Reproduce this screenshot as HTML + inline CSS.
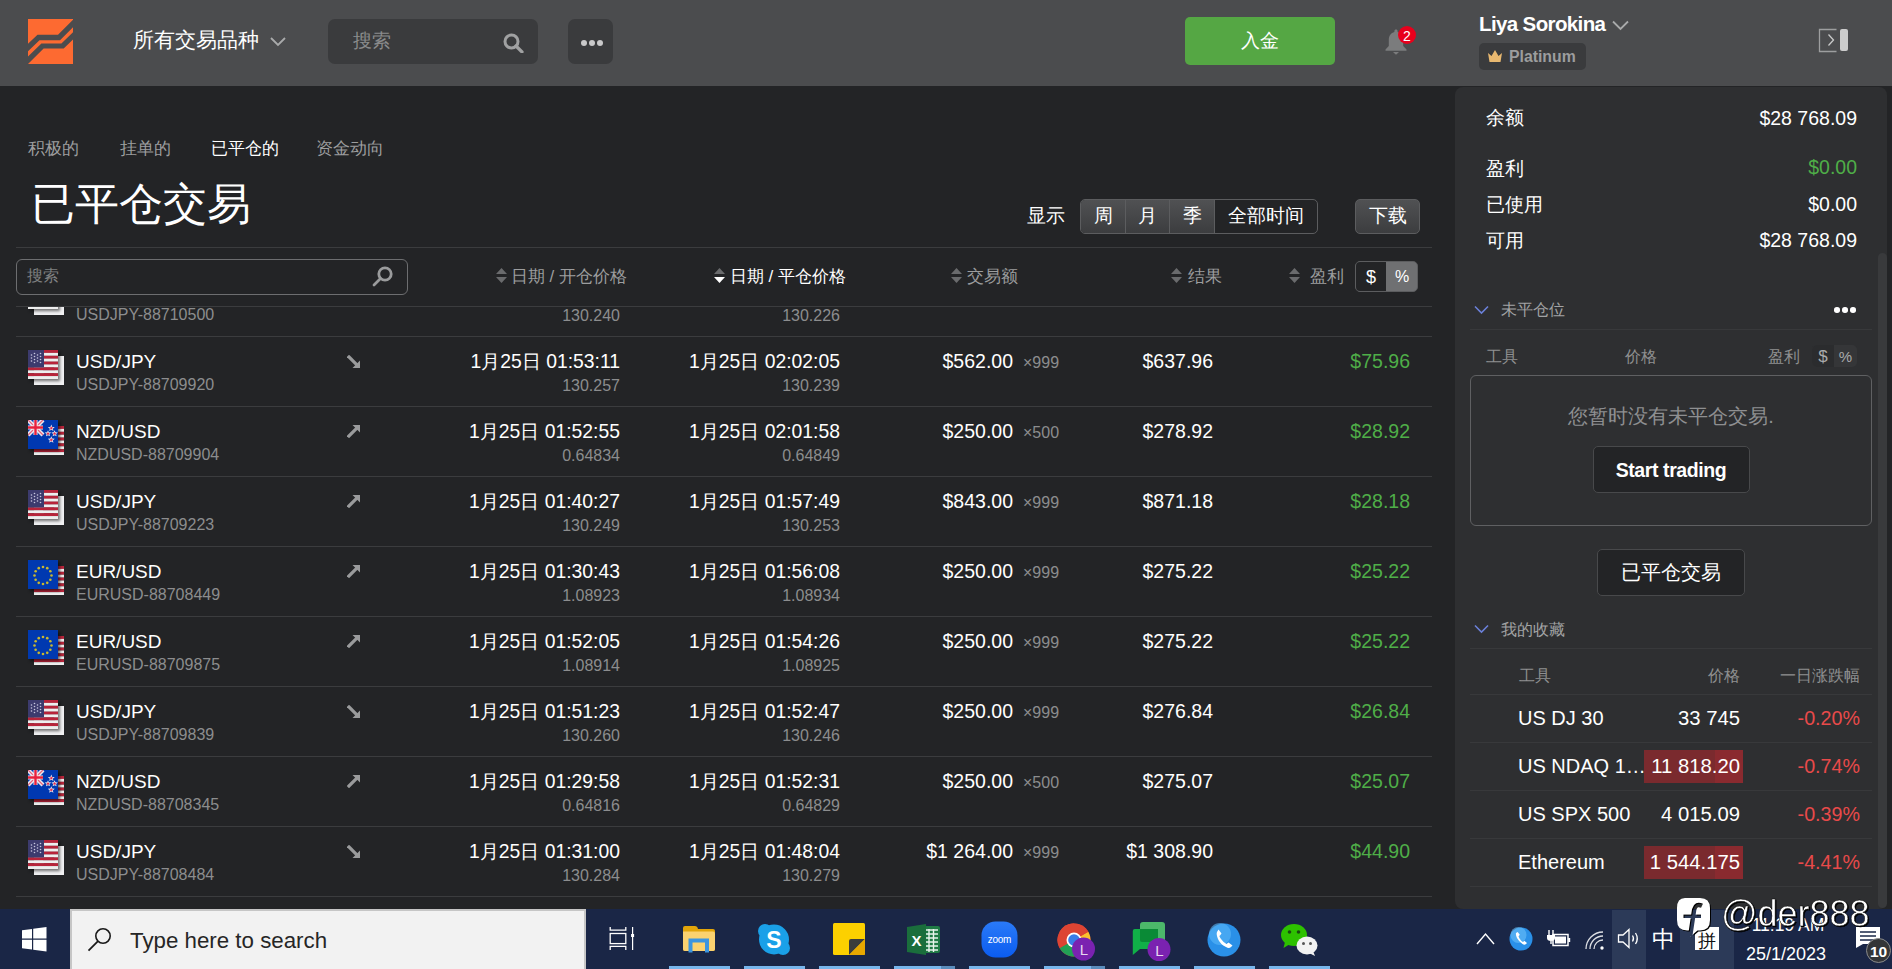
<!DOCTYPE html>
<html><head><meta charset="utf-8"><style>
html,body{margin:0;padding:0;}
body{width:1892px;height:969px;overflow:hidden;position:relative;background:#232426;font-family:"Liberation Sans",sans-serif;}
.t{position:absolute;white-space:nowrap;}
</style></head><body>
<div style="position:absolute;left:0px;top:0px;width:1892px;height:86px;background:#4b4c4e;"></div><svg style="position:absolute;left:28px;top:19px;" width="45" height="45" viewBox="0 0 45 45"><path fill="#fd6a31" d="M0 0H45V0.7L30 15.8H9.5L0 24.8Z"/><path fill="#fd6a31" d="M0 32.3L11.5 21.3H32L45 8.2V13.2L33.4 24.5H13.4L0 37.6Z"/><path fill="#fd6a31" d="M0 45L15.6 29.6H35.7L45 20.5V45Z"/></svg><div class="t" style="left:133px;top:29.02px;font-size:21px;line-height:21px;color:#ffffff;font-weight:400;">所有交易品种</div><svg style="position:absolute;left:270px;top:37px;" width="16" height="10" viewBox="0 0 16 10"><path d="M1 1L8 8L15 1" fill="none" stroke="#a9aaab" stroke-width="1.8"/></svg><div style="position:absolute;left:328px;top:19px;width:210px;height:45px;background:#3a3b3d;border-radius:7px;"></div><div class="t" style="left:353px;top:30.92px;font-size:19px;line-height:19px;color:#8a8b8c;font-weight:400;">搜索</div><svg style="position:absolute;left:503px;top:33px;" width="21" height="20" viewBox="0 0 21 20"><circle cx="8.5" cy="8.5" r="6.5" fill="none" stroke="#a0a1a2" stroke-width="3"/><path d="M13 13L19 19" stroke="#a0a1a2" stroke-width="3.2" stroke-linecap="round"/></svg><div style="position:absolute;left:568px;top:19px;width:45px;height:45px;background:#3a3b3d;border-radius:7px;"></div><div style="position:absolute;left:580.5px;top:39.5px;width:6px;height:6px;background:#c9c9ca;border-radius:50%;"></div><div style="position:absolute;left:588.5px;top:39.5px;width:6px;height:6px;background:#c9c9ca;border-radius:50%;"></div><div style="position:absolute;left:596.5px;top:39.5px;width:6px;height:6px;background:#c9c9ca;border-radius:50%;"></div><div style="position:absolute;left:1185px;top:17px;width:150px;height:48px;background:#55a744;border-radius:5px;"></div><div class="t" style="left:760px;width:1000px;text-align:center;top:31.42px;font-size:19px;line-height:19px;color:#ffffff;font-weight:400;">入金</div><svg style="position:absolute;left:1383px;top:28px;" width="26" height="28" viewBox="0 0 26 28"><path fill="#7b7c7d" d="M13 1.5c1 0 1.6.7 1.6 1.6v.8c3.4.8 5.6 3.8 5.6 7.6v6.5l3.3 3.6v1.2H2.5v-1.2l3.3-3.6v-6.5c0-3.8 2.2-6.8 5.6-7.6v-.8c0-.9.6-1.6 1.6-1.6z"/><path fill="#7b7c7d" d="M10 24h6l-3 2.8z"/></svg><div style="position:absolute;left:1398px;top:26px;width:18px;height:18px;background:#e8001c;border-radius:50%;"></div><div class="t" style="left:907px;width:1000px;text-align:center;top:28.65px;font-size:14px;line-height:14px;color:#ffffff;font-weight:400;">2</div><div class="t" style="left:1479px;top:13.65px;font-size:20.5px;line-height:20.5px;color:#ffffff;font-weight:700;letter-spacing:-0.62px;">Liya Sorokina</div><svg style="position:absolute;left:1612px;top:20px;" width="17" height="11" viewBox="0 0 17 11"><path d="M1 1.5L8.5 9L16 1.5" fill="none" stroke="#a9aaab" stroke-width="1.8"/></svg><div style="position:absolute;left:1479px;top:43px;width:107px;height:27px;background:#3a3b3d;border-radius:5px;"></div><svg style="position:absolute;left:1488px;top:50px;" width="14" height="12" viewBox="0 0 14 12"><path fill="#e8b870" d="M0 3L3.5 6L7 0L10.5 6L14 3L12.5 12H1.5Z"/></svg><div class="t" style="left:1509px;top:49.43px;font-size:15.8px;line-height:15.8px;color:#9c9d9e;font-weight:700;">Platinum</div><svg style="position:absolute;left:1818px;top:28px;" width="32" height="25" viewBox="0 0 32 25"><path d="M18.5 1.5H1.5V23.5H18.5" fill="none" stroke="#9d9e9f" stroke-width="1.3"/><path d="M10.5 6.5L15.5 12L10.5 17.5" fill="none" stroke="#c9caca" stroke-width="1.3"/><rect x="22" y="1" width="8" height="22" rx="2" fill="#cccccc"/></svg><div class="t" style="left:28px;top:139.56px;font-size:17px;line-height:17px;color:#9c9d9e;font-weight:400;">积极的</div><div class="t" style="left:120px;top:139.56px;font-size:17px;line-height:17px;color:#9c9d9e;font-weight:400;">挂单的</div><div class="t" style="left:211px;top:139.56px;font-size:17px;line-height:17px;color:#ffffff;font-weight:400;">已平仓的</div><div class="t" style="left:316px;top:139.56px;font-size:17px;line-height:17px;color:#9c9d9e;font-weight:400;">资金动向</div><div class="t" style="left:31px;top:181.85px;font-size:44px;line-height:44px;color:#ffffff;font-weight:400;">已平仓交易</div><div class="t" style="left:1027px;top:206.32px;font-size:19px;line-height:19px;color:#ffffff;font-weight:400;">显示</div><div style="position:absolute;left:1080px;top:199px;width:238px;height:35px;box-sizing:border-box;border:1px solid #5c5d5f;border-radius:5px;background:#232426;overflow:hidden;"></div><div style="position:absolute;left:1081px;top:200px;width:133px;height:33px;background:linear-gradient(#505153,#3c3d3f);border-top-left-radius:4px;border-bottom-left-radius:4px;"></div><div style="position:absolute;left:1125px;top:200px;width:1px;height:33px;background:#5c5d5f;"></div><div style="position:absolute;left:1169px;top:200px;width:1px;height:33px;background:#5c5d5f;"></div><div style="position:absolute;left:1214px;top:200px;width:1px;height:33px;background:#5c5d5f;"></div><div class="t" style="left:603px;width:1000px;text-align:center;top:206.32px;font-size:19px;line-height:19px;color:#ffffff;font-weight:400;">周</div><div class="t" style="left:647px;width:1000px;text-align:center;top:206.32px;font-size:19px;line-height:19px;color:#ffffff;font-weight:400;">月</div><div class="t" style="left:692px;width:1000px;text-align:center;top:206.32px;font-size:19px;line-height:19px;color:#ffffff;font-weight:400;">季</div><div class="t" style="left:766px;width:1000px;text-align:center;top:206.32px;font-size:19px;line-height:19px;color:#ffffff;font-weight:400;">全部时间</div><div style="position:absolute;left:1355px;top:199px;width:65px;height:35px;box-sizing:border-box;border:1px solid #5c5d5f;border-radius:5px;background:linear-gradient(#505153,#3c3d3f);"></div><div class="t" style="left:888px;width:1000px;text-align:center;top:206.32px;font-size:19px;line-height:19px;color:#ffffff;font-weight:400;">下载</div><div style="position:absolute;left:16px;top:247px;width:1416px;height:1px;background:#3b3c3e;"></div><div style="position:absolute;left:16px;top:259px;width:392px;height:36px;box-sizing:border-box;border:1.5px solid #6d6e70;border-radius:6px;"></div><div class="t" style="left:27px;top:267.66px;font-size:16px;line-height:16px;color:#7f8081;font-weight:400;">搜索</div><svg style="position:absolute;left:371px;top:265px;" width="24" height="22" viewBox="0 0 24 22"><circle cx="14" cy="9" r="6.2" fill="none" stroke="#9a9b9c" stroke-width="2.8"/><path d="M9.5 13.5L3 20" stroke="#9a9b9c" stroke-width="2.8" stroke-linecap="round"/></svg><svg style="position:absolute;left:496px;top:268px;" width="11" height="15" viewBox="0 0 11 15"><path d="M5.5 0L11 6H0Z" fill="#6a6b6d"/><path d="M0 9H11L5.5 15Z" fill="#6a6b6d"/></svg><div class="t" style="left:-373px;width:1000px;text-align:right;top:268.11px;font-size:17px;line-height:17px;color:#9c9d9e;font-weight:400;">日期 / 开仓价格</div><svg style="position:absolute;left:714px;top:268px;" width="11" height="15" viewBox="0 0 11 15"><path d="M5.5 0L11 6H0Z" fill="#6a6b6d"/><path d="M0 9H11L5.5 15Z" fill="#ffffff"/></svg><div class="t" style="left:-154px;width:1000px;text-align:right;top:268.11px;font-size:17px;line-height:17px;color:#ffffff;font-weight:400;">日期 / 平仓价格</div><svg style="position:absolute;left:951px;top:268px;" width="11" height="15" viewBox="0 0 11 15"><path d="M5.5 0L11 6H0Z" fill="#6a6b6d"/><path d="M0 9H11L5.5 15Z" fill="#6a6b6d"/></svg><div class="t" style="left:18px;width:1000px;text-align:right;top:268.11px;font-size:17px;line-height:17px;color:#9c9d9e;font-weight:400;">交易额</div><svg style="position:absolute;left:1171px;top:268px;" width="11" height="15" viewBox="0 0 11 15"><path d="M5.5 0L11 6H0Z" fill="#6a6b6d"/><path d="M0 9H11L5.5 15Z" fill="#6a6b6d"/></svg><div class="t" style="left:222px;width:1000px;text-align:right;top:268.11px;font-size:17px;line-height:17px;color:#9c9d9e;font-weight:400;">结果</div><svg style="position:absolute;left:1289px;top:268px;" width="11" height="15" viewBox="0 0 11 15"><path d="M5.5 0L11 6H0Z" fill="#6a6b6d"/><path d="M0 9H11L5.5 15Z" fill="#6a6b6d"/></svg><div class="t" style="left:344px;width:1000px;text-align:right;top:268.11px;font-size:17px;line-height:17px;color:#9c9d9e;font-weight:400;">盈利</div><div style="position:absolute;left:1355px;top:261px;width:63px;height:31px;box-sizing:border-box;border:1px solid #5c5d5f;border-radius:5px;background:#6f7072;overflow:hidden;"></div><div style="position:absolute;left:1356px;top:262px;width:30px;height:29px;background:#232426;border-top-left-radius:4px;border-bottom-left-radius:4px;"></div><div class="t" style="left:871px;width:1000px;text-align:center;top:267.76px;font-size:18px;line-height:18px;color:#ffffff;font-weight:400;">$</div><div class="t" style="left:902px;width:1000px;text-align:center;top:268.96px;font-size:16px;line-height:16px;color:#ffffff;font-weight:400;">%</div><div style="position:absolute;left:16px;top:306px;width:1416px;height:1px;background:#3b3c3e;"></div><div style="position:absolute;left:0;top:307px;width:1455px;height:602px;overflow:hidden"><div style="position:absolute;left:0;top:-307px;width:1455px;height:969px"><svg style="position:absolute;left:34px;top:286px;filter:drop-shadow(0 0 0.6px rgba(0,0,0,.6));" width="30" height="29" viewBox="0 0 30 29"><rect width="30" height="29" fill="#f0f0f2"/><circle cx="15" cy="14.5" r="6" fill="#c02040"/></svg><svg style="position:absolute;left:28px;top:280px;filter:drop-shadow(2px 2px 1.5px rgba(0,0,0,.55));" width="30" height="29" viewBox="0 0 30 29"><rect x="0" y="0.00" width="30" height="2.95" fill="#b8243a"/><rect x="0" y="2.90" width="30" height="2.95" fill="#eeeeee"/><rect x="0" y="5.80" width="30" height="2.95" fill="#b8243a"/><rect x="0" y="8.70" width="30" height="2.95" fill="#eeeeee"/><rect x="0" y="11.60" width="30" height="2.95" fill="#b8243a"/><rect x="0" y="14.50" width="30" height="2.95" fill="#eeeeee"/><rect x="0" y="17.40" width="30" height="2.95" fill="#b8243a"/><rect x="0" y="20.30" width="30" height="2.95" fill="#eeeeee"/><rect x="0" y="23.20" width="30" height="2.95" fill="#b8243a"/><rect x="0" y="26.10" width="30" height="2.95" fill="#eeeeee"/><rect x="0" y="0" width="16" height="17.40" fill="#3c3b6e"/><circle cx="3.5" cy="5" r="0.8" fill="#c8c8e0"/><circle cx="6.5" cy="3.5" r="0.8" fill="#c8c8e0"/><circle cx="9.5" cy="5" r="0.8" fill="#c8c8e0"/><circle cx="12.5" cy="3.5" r="0.8" fill="#c8c8e0"/><circle cx="3.5" cy="8" r="0.8" fill="#c8c8e0"/><circle cx="6.5" cy="6.5" r="0.8" fill="#c8c8e0"/><circle cx="9.5" cy="8" r="0.8" fill="#c8c8e0"/><circle cx="12.5" cy="6.5" r="0.8" fill="#c8c8e0"/><circle cx="3.5" cy="11" r="0.8" fill="#c8c8e0"/><circle cx="6.5" cy="9.5" r="0.8" fill="#c8c8e0"/><circle cx="9.5" cy="11" r="0.8" fill="#c8c8e0"/><circle cx="12.5" cy="9.5" r="0.8" fill="#c8c8e0"/><circle cx="6.5" cy="12.5" r="0.8" fill="#c8c8e0"/><circle cx="12.5" cy="12.5" r="0.8" fill="#c8c8e0"/></svg><div class="t" style="left:76px;top:281.92px;font-size:19px;line-height:19px;color:#ffffff;font-weight:400;">USD/JPY</div><div class="t" style="left:76px;top:306.96px;font-size:16px;line-height:16px;color:#8c8d8e;font-weight:400;">USDJPY-88710500</div><svg style="position:absolute;left:347px;top:284px;" width="14" height="14" viewBox="0 0 14 14"><path d="M2 12L9.5 4.5" stroke="#9a9b9c" stroke-width="3.2" stroke-linecap="square"/><path d="M5.5 1H13V8.5Z" fill="#9a9b9c"/></svg><div class="t" style="left:-380px;width:1000px;text-align:right;top:281.92px;font-size:19.35px;line-height:19.35px;color:#ffffff;font-weight:400;">1月25日 01:20:00</div><div class="t" style="left:-380px;width:1000px;text-align:right;top:307.76px;font-size:16px;line-height:16px;color:#8c8d8e;font-weight:400;">130.240</div><div class="t" style="left:-160px;width:1000px;text-align:right;top:281.92px;font-size:19.35px;line-height:19.35px;color:#ffffff;font-weight:400;">1月25日 01:50:00</div><div class="t" style="left:-160px;width:1000px;text-align:right;top:307.76px;font-size:16px;line-height:16px;color:#8c8d8e;font-weight:400;">130.226</div><div class="t" style="left:13px;width:1000px;text-align:right;top:282.19px;font-size:19.5px;line-height:19.5px;color:#ffffff;font-weight:400;">$250.00</div><div class="t" style="left:1023px;top:285.16px;font-size:16px;line-height:16px;color:#8c8d8e;font-weight:400;">×999</div><div class="t" style="left:213px;width:1000px;text-align:right;top:282.19px;font-size:19.5px;line-height:19.5px;color:#ffffff;font-weight:400;">$275.00</div><div class="t" style="left:410px;width:1000px;text-align:right;top:282.19px;font-size:19.5px;line-height:19.5px;color:#4fae48;font-weight:400;">$25.00</div><div style="position:absolute;left:16px;top:336px;width:1416px;height:1px;background:#3b3c3e;"></div><svg style="position:absolute;left:34px;top:356px;filter:drop-shadow(0 0 0.6px rgba(0,0,0,.6));" width="30" height="29" viewBox="0 0 30 29"><rect width="30" height="29" fill="#f0f0f2"/><circle cx="15" cy="14.5" r="6" fill="#c02040"/></svg><svg style="position:absolute;left:28px;top:350px;filter:drop-shadow(2px 2px 1.5px rgba(0,0,0,.55));" width="30" height="29" viewBox="0 0 30 29"><rect x="0" y="0.00" width="30" height="2.95" fill="#b8243a"/><rect x="0" y="2.90" width="30" height="2.95" fill="#eeeeee"/><rect x="0" y="5.80" width="30" height="2.95" fill="#b8243a"/><rect x="0" y="8.70" width="30" height="2.95" fill="#eeeeee"/><rect x="0" y="11.60" width="30" height="2.95" fill="#b8243a"/><rect x="0" y="14.50" width="30" height="2.95" fill="#eeeeee"/><rect x="0" y="17.40" width="30" height="2.95" fill="#b8243a"/><rect x="0" y="20.30" width="30" height="2.95" fill="#eeeeee"/><rect x="0" y="23.20" width="30" height="2.95" fill="#b8243a"/><rect x="0" y="26.10" width="30" height="2.95" fill="#eeeeee"/><rect x="0" y="0" width="16" height="17.40" fill="#3c3b6e"/><circle cx="3.5" cy="5" r="0.8" fill="#c8c8e0"/><circle cx="6.5" cy="3.5" r="0.8" fill="#c8c8e0"/><circle cx="9.5" cy="5" r="0.8" fill="#c8c8e0"/><circle cx="12.5" cy="3.5" r="0.8" fill="#c8c8e0"/><circle cx="3.5" cy="8" r="0.8" fill="#c8c8e0"/><circle cx="6.5" cy="6.5" r="0.8" fill="#c8c8e0"/><circle cx="9.5" cy="8" r="0.8" fill="#c8c8e0"/><circle cx="12.5" cy="6.5" r="0.8" fill="#c8c8e0"/><circle cx="3.5" cy="11" r="0.8" fill="#c8c8e0"/><circle cx="6.5" cy="9.5" r="0.8" fill="#c8c8e0"/><circle cx="9.5" cy="11" r="0.8" fill="#c8c8e0"/><circle cx="12.5" cy="9.5" r="0.8" fill="#c8c8e0"/><circle cx="6.5" cy="12.5" r="0.8" fill="#c8c8e0"/><circle cx="12.5" cy="12.5" r="0.8" fill="#c8c8e0"/></svg><div class="t" style="left:76px;top:351.92px;font-size:19px;line-height:19px;color:#ffffff;font-weight:400;">USD/JPY</div><div class="t" style="left:76px;top:376.96px;font-size:16px;line-height:16px;color:#8c8d8e;font-weight:400;">USDJPY-88709920</div><svg style="position:absolute;left:347px;top:355px;" width="14" height="14" viewBox="0 0 14 14"><path d="M2 2L9.5 9.5" stroke="#9a9b9c" stroke-width="3.2" stroke-linecap="square"/><path d="M13 5.5V13H5.5Z" fill="#9a9b9c"/></svg><div class="t" style="left:-380px;width:1000px;text-align:right;top:351.92px;font-size:19.35px;line-height:19.35px;color:#ffffff;font-weight:400;">1月25日 01:53:11</div><div class="t" style="left:-380px;width:1000px;text-align:right;top:377.76px;font-size:16px;line-height:16px;color:#8c8d8e;font-weight:400;">130.257</div><div class="t" style="left:-160px;width:1000px;text-align:right;top:351.92px;font-size:19.35px;line-height:19.35px;color:#ffffff;font-weight:400;">1月25日 02:02:05</div><div class="t" style="left:-160px;width:1000px;text-align:right;top:377.76px;font-size:16px;line-height:16px;color:#8c8d8e;font-weight:400;">130.239</div><div class="t" style="left:13px;width:1000px;text-align:right;top:352.19px;font-size:19.5px;line-height:19.5px;color:#ffffff;font-weight:400;">$562.00</div><div class="t" style="left:1023px;top:355.16px;font-size:16px;line-height:16px;color:#8c8d8e;font-weight:400;">×999</div><div class="t" style="left:213px;width:1000px;text-align:right;top:352.19px;font-size:19.5px;line-height:19.5px;color:#ffffff;font-weight:400;">$637.96</div><div class="t" style="left:410px;width:1000px;text-align:right;top:352.19px;font-size:19.5px;line-height:19.5px;color:#4fae48;font-weight:400;">$75.96</div><div style="position:absolute;left:16px;top:406px;width:1416px;height:1px;background:#3b3c3e;"></div><svg style="position:absolute;left:34px;top:426px;filter:drop-shadow(0 0 0.6px rgba(0,0,0,.6));" width="30" height="29" viewBox="0 0 30 29"><rect x="0" y="0.00" width="30" height="2.95" fill="#b8243a"/><rect x="0" y="2.90" width="30" height="2.95" fill="#eeeeee"/><rect x="0" y="5.80" width="30" height="2.95" fill="#b8243a"/><rect x="0" y="8.70" width="30" height="2.95" fill="#eeeeee"/><rect x="0" y="11.60" width="30" height="2.95" fill="#b8243a"/><rect x="0" y="14.50" width="30" height="2.95" fill="#eeeeee"/><rect x="0" y="17.40" width="30" height="2.95" fill="#b8243a"/><rect x="0" y="20.30" width="30" height="2.95" fill="#eeeeee"/><rect x="0" y="23.20" width="30" height="2.95" fill="#b8243a"/><rect x="0" y="26.10" width="30" height="2.95" fill="#eeeeee"/><rect x="0" y="0" width="16" height="17.40" fill="#3c3b6e"/><circle cx="3.5" cy="5" r="0.8" fill="#c8c8e0"/><circle cx="6.5" cy="3.5" r="0.8" fill="#c8c8e0"/><circle cx="9.5" cy="5" r="0.8" fill="#c8c8e0"/><circle cx="12.5" cy="3.5" r="0.8" fill="#c8c8e0"/><circle cx="3.5" cy="8" r="0.8" fill="#c8c8e0"/><circle cx="6.5" cy="6.5" r="0.8" fill="#c8c8e0"/><circle cx="9.5" cy="8" r="0.8" fill="#c8c8e0"/><circle cx="12.5" cy="6.5" r="0.8" fill="#c8c8e0"/><circle cx="3.5" cy="11" r="0.8" fill="#c8c8e0"/><circle cx="6.5" cy="9.5" r="0.8" fill="#c8c8e0"/><circle cx="9.5" cy="11" r="0.8" fill="#c8c8e0"/><circle cx="12.5" cy="9.5" r="0.8" fill="#c8c8e0"/><circle cx="6.5" cy="12.5" r="0.8" fill="#c8c8e0"/><circle cx="12.5" cy="12.5" r="0.8" fill="#c8c8e0"/></svg><svg style="position:absolute;left:28px;top:420px;filter:drop-shadow(2px 2px 1.5px rgba(0,0,0,.55));" width="30" height="29" viewBox="0 0 30 29"><rect width="30" height="29" fill="#0038b0"/><rect width="15" height="15" fill="#0038b0"/><path d="M0 0L15 15M15 0L0 15" stroke="#e8e8f0" stroke-width="4.2"/><path d="M0 0L15 15M15 0L0 15" stroke="#e86078" stroke-width="1.2"/><path d="M7.5 0V15M0 7.5H15" stroke="#f0f0f0" stroke-width="4"/><path d="M7.5 0V15M0 7.5H15" stroke="#e8203c" stroke-width="2.4"/><polygon points="23.30,4.60 24.25,6.89 26.72,7.09 24.84,8.70 25.42,11.11 23.30,9.82 21.18,11.11 21.76,8.70 19.88,7.09 22.35,6.89" fill="#e8e8f0"/><polygon points="23.30,6.22 23.82,7.48 25.18,7.59 24.15,8.48 24.46,9.80 23.30,9.09 22.14,9.80 22.45,8.48 21.42,7.59 22.78,7.48" fill="#e0284a"/><polygon points="20.00,10.20 20.90,12.36 23.23,12.55 21.46,14.07 22.00,16.35 20.00,15.13 18.00,16.35 18.54,14.07 16.77,12.55 19.10,12.36" fill="#e8e8f0"/><polygon points="20.00,11.73 20.49,12.92 21.78,13.02 20.80,13.86 21.10,15.11 20.00,14.44 18.90,15.11 19.20,13.86 18.22,13.02 19.51,12.92" fill="#e0284a"/><polygon points="26.60,10.20 27.50,12.36 29.83,12.55 28.06,14.07 28.60,16.35 26.60,15.13 24.60,16.35 25.14,14.07 23.37,12.55 25.70,12.36" fill="#e8e8f0"/><polygon points="26.60,11.73 27.09,12.92 28.38,13.02 27.40,13.86 27.70,15.11 26.60,14.44 25.50,15.11 25.80,13.86 24.82,13.02 26.11,12.92" fill="#e0284a"/><polygon points="23.30,16.30 24.25,18.59 26.72,18.79 24.84,20.40 25.42,22.81 23.30,21.52 21.18,22.81 21.76,20.40 19.88,18.79 22.35,18.59" fill="#e8e8f0"/><polygon points="23.30,17.92 23.82,19.18 25.18,19.29 24.15,20.18 24.46,21.50 23.30,20.79 22.14,21.50 22.45,20.18 21.42,19.29 22.78,19.18" fill="#e0284a"/></svg><div class="t" style="left:76px;top:421.92px;font-size:19px;line-height:19px;color:#ffffff;font-weight:400;">NZD/USD</div><div class="t" style="left:76px;top:446.96px;font-size:16px;line-height:16px;color:#8c8d8e;font-weight:400;">NZDUSD-88709904</div><svg style="position:absolute;left:347px;top:424px;" width="14" height="14" viewBox="0 0 14 14"><path d="M2 12L9.5 4.5" stroke="#9a9b9c" stroke-width="3.2" stroke-linecap="square"/><path d="M5.5 1H13V8.5Z" fill="#9a9b9c"/></svg><div class="t" style="left:-380px;width:1000px;text-align:right;top:421.92px;font-size:19.35px;line-height:19.35px;color:#ffffff;font-weight:400;">1月25日 01:52:55</div><div class="t" style="left:-380px;width:1000px;text-align:right;top:447.76px;font-size:16px;line-height:16px;color:#8c8d8e;font-weight:400;">0.64834</div><div class="t" style="left:-160px;width:1000px;text-align:right;top:421.92px;font-size:19.35px;line-height:19.35px;color:#ffffff;font-weight:400;">1月25日 02:01:58</div><div class="t" style="left:-160px;width:1000px;text-align:right;top:447.76px;font-size:16px;line-height:16px;color:#8c8d8e;font-weight:400;">0.64849</div><div class="t" style="left:13px;width:1000px;text-align:right;top:422.19px;font-size:19.5px;line-height:19.5px;color:#ffffff;font-weight:400;">$250.00</div><div class="t" style="left:1023px;top:425.16px;font-size:16px;line-height:16px;color:#8c8d8e;font-weight:400;">×500</div><div class="t" style="left:213px;width:1000px;text-align:right;top:422.19px;font-size:19.5px;line-height:19.5px;color:#ffffff;font-weight:400;">$278.92</div><div class="t" style="left:410px;width:1000px;text-align:right;top:422.19px;font-size:19.5px;line-height:19.5px;color:#4fae48;font-weight:400;">$28.92</div><div style="position:absolute;left:16px;top:476px;width:1416px;height:1px;background:#3b3c3e;"></div><svg style="position:absolute;left:34px;top:496px;filter:drop-shadow(0 0 0.6px rgba(0,0,0,.6));" width="30" height="29" viewBox="0 0 30 29"><rect width="30" height="29" fill="#f0f0f2"/><circle cx="15" cy="14.5" r="6" fill="#c02040"/></svg><svg style="position:absolute;left:28px;top:490px;filter:drop-shadow(2px 2px 1.5px rgba(0,0,0,.55));" width="30" height="29" viewBox="0 0 30 29"><rect x="0" y="0.00" width="30" height="2.95" fill="#b8243a"/><rect x="0" y="2.90" width="30" height="2.95" fill="#eeeeee"/><rect x="0" y="5.80" width="30" height="2.95" fill="#b8243a"/><rect x="0" y="8.70" width="30" height="2.95" fill="#eeeeee"/><rect x="0" y="11.60" width="30" height="2.95" fill="#b8243a"/><rect x="0" y="14.50" width="30" height="2.95" fill="#eeeeee"/><rect x="0" y="17.40" width="30" height="2.95" fill="#b8243a"/><rect x="0" y="20.30" width="30" height="2.95" fill="#eeeeee"/><rect x="0" y="23.20" width="30" height="2.95" fill="#b8243a"/><rect x="0" y="26.10" width="30" height="2.95" fill="#eeeeee"/><rect x="0" y="0" width="16" height="17.40" fill="#3c3b6e"/><circle cx="3.5" cy="5" r="0.8" fill="#c8c8e0"/><circle cx="6.5" cy="3.5" r="0.8" fill="#c8c8e0"/><circle cx="9.5" cy="5" r="0.8" fill="#c8c8e0"/><circle cx="12.5" cy="3.5" r="0.8" fill="#c8c8e0"/><circle cx="3.5" cy="8" r="0.8" fill="#c8c8e0"/><circle cx="6.5" cy="6.5" r="0.8" fill="#c8c8e0"/><circle cx="9.5" cy="8" r="0.8" fill="#c8c8e0"/><circle cx="12.5" cy="6.5" r="0.8" fill="#c8c8e0"/><circle cx="3.5" cy="11" r="0.8" fill="#c8c8e0"/><circle cx="6.5" cy="9.5" r="0.8" fill="#c8c8e0"/><circle cx="9.5" cy="11" r="0.8" fill="#c8c8e0"/><circle cx="12.5" cy="9.5" r="0.8" fill="#c8c8e0"/><circle cx="6.5" cy="12.5" r="0.8" fill="#c8c8e0"/><circle cx="12.5" cy="12.5" r="0.8" fill="#c8c8e0"/></svg><div class="t" style="left:76px;top:491.92px;font-size:19px;line-height:19px;color:#ffffff;font-weight:400;">USD/JPY</div><div class="t" style="left:76px;top:516.96px;font-size:16px;line-height:16px;color:#8c8d8e;font-weight:400;">USDJPY-88709223</div><svg style="position:absolute;left:347px;top:494px;" width="14" height="14" viewBox="0 0 14 14"><path d="M2 12L9.5 4.5" stroke="#9a9b9c" stroke-width="3.2" stroke-linecap="square"/><path d="M5.5 1H13V8.5Z" fill="#9a9b9c"/></svg><div class="t" style="left:-380px;width:1000px;text-align:right;top:491.92px;font-size:19.35px;line-height:19.35px;color:#ffffff;font-weight:400;">1月25日 01:40:27</div><div class="t" style="left:-380px;width:1000px;text-align:right;top:517.76px;font-size:16px;line-height:16px;color:#8c8d8e;font-weight:400;">130.249</div><div class="t" style="left:-160px;width:1000px;text-align:right;top:491.92px;font-size:19.35px;line-height:19.35px;color:#ffffff;font-weight:400;">1月25日 01:57:49</div><div class="t" style="left:-160px;width:1000px;text-align:right;top:517.76px;font-size:16px;line-height:16px;color:#8c8d8e;font-weight:400;">130.253</div><div class="t" style="left:13px;width:1000px;text-align:right;top:492.19px;font-size:19.5px;line-height:19.5px;color:#ffffff;font-weight:400;">$843.00</div><div class="t" style="left:1023px;top:495.16px;font-size:16px;line-height:16px;color:#8c8d8e;font-weight:400;">×999</div><div class="t" style="left:213px;width:1000px;text-align:right;top:492.19px;font-size:19.5px;line-height:19.5px;color:#ffffff;font-weight:400;">$871.18</div><div class="t" style="left:410px;width:1000px;text-align:right;top:492.19px;font-size:19.5px;line-height:19.5px;color:#4fae48;font-weight:400;">$28.18</div><div style="position:absolute;left:16px;top:546px;width:1416px;height:1px;background:#3b3c3e;"></div><svg style="position:absolute;left:34px;top:566px;filter:drop-shadow(0 0 0.6px rgba(0,0,0,.6));" width="30" height="29" viewBox="0 0 30 29"><rect x="0" y="0.00" width="30" height="2.95" fill="#b8243a"/><rect x="0" y="2.90" width="30" height="2.95" fill="#eeeeee"/><rect x="0" y="5.80" width="30" height="2.95" fill="#b8243a"/><rect x="0" y="8.70" width="30" height="2.95" fill="#eeeeee"/><rect x="0" y="11.60" width="30" height="2.95" fill="#b8243a"/><rect x="0" y="14.50" width="30" height="2.95" fill="#eeeeee"/><rect x="0" y="17.40" width="30" height="2.95" fill="#b8243a"/><rect x="0" y="20.30" width="30" height="2.95" fill="#eeeeee"/><rect x="0" y="23.20" width="30" height="2.95" fill="#b8243a"/><rect x="0" y="26.10" width="30" height="2.95" fill="#eeeeee"/><rect x="0" y="0" width="16" height="17.40" fill="#3c3b6e"/><circle cx="3.5" cy="5" r="0.8" fill="#c8c8e0"/><circle cx="6.5" cy="3.5" r="0.8" fill="#c8c8e0"/><circle cx="9.5" cy="5" r="0.8" fill="#c8c8e0"/><circle cx="12.5" cy="3.5" r="0.8" fill="#c8c8e0"/><circle cx="3.5" cy="8" r="0.8" fill="#c8c8e0"/><circle cx="6.5" cy="6.5" r="0.8" fill="#c8c8e0"/><circle cx="9.5" cy="8" r="0.8" fill="#c8c8e0"/><circle cx="12.5" cy="6.5" r="0.8" fill="#c8c8e0"/><circle cx="3.5" cy="11" r="0.8" fill="#c8c8e0"/><circle cx="6.5" cy="9.5" r="0.8" fill="#c8c8e0"/><circle cx="9.5" cy="11" r="0.8" fill="#c8c8e0"/><circle cx="12.5" cy="9.5" r="0.8" fill="#c8c8e0"/><circle cx="6.5" cy="12.5" r="0.8" fill="#c8c8e0"/><circle cx="12.5" cy="12.5" r="0.8" fill="#c8c8e0"/></svg><svg style="position:absolute;left:28px;top:560px;filter:drop-shadow(2px 2px 1.5px rgba(0,0,0,.55));" width="30" height="29" viewBox="0 0 30 29"><rect width="30" height="29" fill="#0039b0"/><circle cx="15.00" cy="7.00" r="1.3" fill="#c8b830"/><circle cx="19.25" cy="8.14" r="1.3" fill="#c8b830"/><circle cx="22.36" cy="11.25" r="1.3" fill="#c8b830"/><circle cx="23.50" cy="15.50" r="1.3" fill="#c8b830"/><circle cx="22.36" cy="19.75" r="1.3" fill="#c8b830"/><circle cx="19.25" cy="22.86" r="1.3" fill="#c8b830"/><circle cx="15.00" cy="24.00" r="1.3" fill="#c8b830"/><circle cx="10.75" cy="22.86" r="1.3" fill="#c8b830"/><circle cx="7.64" cy="19.75" r="1.3" fill="#c8b830"/><circle cx="6.50" cy="15.50" r="1.3" fill="#c8b830"/><circle cx="7.64" cy="11.25" r="1.3" fill="#c8b830"/><circle cx="10.75" cy="8.14" r="1.3" fill="#c8b830"/></svg><div class="t" style="left:76px;top:561.92px;font-size:19px;line-height:19px;color:#ffffff;font-weight:400;">EUR/USD</div><div class="t" style="left:76px;top:586.96px;font-size:16px;line-height:16px;color:#8c8d8e;font-weight:400;">EURUSD-88708449</div><svg style="position:absolute;left:347px;top:564px;" width="14" height="14" viewBox="0 0 14 14"><path d="M2 12L9.5 4.5" stroke="#9a9b9c" stroke-width="3.2" stroke-linecap="square"/><path d="M5.5 1H13V8.5Z" fill="#9a9b9c"/></svg><div class="t" style="left:-380px;width:1000px;text-align:right;top:561.92px;font-size:19.35px;line-height:19.35px;color:#ffffff;font-weight:400;">1月25日 01:30:43</div><div class="t" style="left:-380px;width:1000px;text-align:right;top:587.76px;font-size:16px;line-height:16px;color:#8c8d8e;font-weight:400;">1.08923</div><div class="t" style="left:-160px;width:1000px;text-align:right;top:561.92px;font-size:19.35px;line-height:19.35px;color:#ffffff;font-weight:400;">1月25日 01:56:08</div><div class="t" style="left:-160px;width:1000px;text-align:right;top:587.76px;font-size:16px;line-height:16px;color:#8c8d8e;font-weight:400;">1.08934</div><div class="t" style="left:13px;width:1000px;text-align:right;top:562.19px;font-size:19.5px;line-height:19.5px;color:#ffffff;font-weight:400;">$250.00</div><div class="t" style="left:1023px;top:565.16px;font-size:16px;line-height:16px;color:#8c8d8e;font-weight:400;">×999</div><div class="t" style="left:213px;width:1000px;text-align:right;top:562.19px;font-size:19.5px;line-height:19.5px;color:#ffffff;font-weight:400;">$275.22</div><div class="t" style="left:410px;width:1000px;text-align:right;top:562.19px;font-size:19.5px;line-height:19.5px;color:#4fae48;font-weight:400;">$25.22</div><div style="position:absolute;left:16px;top:616px;width:1416px;height:1px;background:#3b3c3e;"></div><svg style="position:absolute;left:34px;top:636px;filter:drop-shadow(0 0 0.6px rgba(0,0,0,.6));" width="30" height="29" viewBox="0 0 30 29"><rect x="0" y="0.00" width="30" height="2.95" fill="#b8243a"/><rect x="0" y="2.90" width="30" height="2.95" fill="#eeeeee"/><rect x="0" y="5.80" width="30" height="2.95" fill="#b8243a"/><rect x="0" y="8.70" width="30" height="2.95" fill="#eeeeee"/><rect x="0" y="11.60" width="30" height="2.95" fill="#b8243a"/><rect x="0" y="14.50" width="30" height="2.95" fill="#eeeeee"/><rect x="0" y="17.40" width="30" height="2.95" fill="#b8243a"/><rect x="0" y="20.30" width="30" height="2.95" fill="#eeeeee"/><rect x="0" y="23.20" width="30" height="2.95" fill="#b8243a"/><rect x="0" y="26.10" width="30" height="2.95" fill="#eeeeee"/><rect x="0" y="0" width="16" height="17.40" fill="#3c3b6e"/><circle cx="3.5" cy="5" r="0.8" fill="#c8c8e0"/><circle cx="6.5" cy="3.5" r="0.8" fill="#c8c8e0"/><circle cx="9.5" cy="5" r="0.8" fill="#c8c8e0"/><circle cx="12.5" cy="3.5" r="0.8" fill="#c8c8e0"/><circle cx="3.5" cy="8" r="0.8" fill="#c8c8e0"/><circle cx="6.5" cy="6.5" r="0.8" fill="#c8c8e0"/><circle cx="9.5" cy="8" r="0.8" fill="#c8c8e0"/><circle cx="12.5" cy="6.5" r="0.8" fill="#c8c8e0"/><circle cx="3.5" cy="11" r="0.8" fill="#c8c8e0"/><circle cx="6.5" cy="9.5" r="0.8" fill="#c8c8e0"/><circle cx="9.5" cy="11" r="0.8" fill="#c8c8e0"/><circle cx="12.5" cy="9.5" r="0.8" fill="#c8c8e0"/><circle cx="6.5" cy="12.5" r="0.8" fill="#c8c8e0"/><circle cx="12.5" cy="12.5" r="0.8" fill="#c8c8e0"/></svg><svg style="position:absolute;left:28px;top:630px;filter:drop-shadow(2px 2px 1.5px rgba(0,0,0,.55));" width="30" height="29" viewBox="0 0 30 29"><rect width="30" height="29" fill="#0039b0"/><circle cx="15.00" cy="7.00" r="1.3" fill="#c8b830"/><circle cx="19.25" cy="8.14" r="1.3" fill="#c8b830"/><circle cx="22.36" cy="11.25" r="1.3" fill="#c8b830"/><circle cx="23.50" cy="15.50" r="1.3" fill="#c8b830"/><circle cx="22.36" cy="19.75" r="1.3" fill="#c8b830"/><circle cx="19.25" cy="22.86" r="1.3" fill="#c8b830"/><circle cx="15.00" cy="24.00" r="1.3" fill="#c8b830"/><circle cx="10.75" cy="22.86" r="1.3" fill="#c8b830"/><circle cx="7.64" cy="19.75" r="1.3" fill="#c8b830"/><circle cx="6.50" cy="15.50" r="1.3" fill="#c8b830"/><circle cx="7.64" cy="11.25" r="1.3" fill="#c8b830"/><circle cx="10.75" cy="8.14" r="1.3" fill="#c8b830"/></svg><div class="t" style="left:76px;top:631.92px;font-size:19px;line-height:19px;color:#ffffff;font-weight:400;">EUR/USD</div><div class="t" style="left:76px;top:656.96px;font-size:16px;line-height:16px;color:#8c8d8e;font-weight:400;">EURUSD-88709875</div><svg style="position:absolute;left:347px;top:634px;" width="14" height="14" viewBox="0 0 14 14"><path d="M2 12L9.5 4.5" stroke="#9a9b9c" stroke-width="3.2" stroke-linecap="square"/><path d="M5.5 1H13V8.5Z" fill="#9a9b9c"/></svg><div class="t" style="left:-380px;width:1000px;text-align:right;top:631.92px;font-size:19.35px;line-height:19.35px;color:#ffffff;font-weight:400;">1月25日 01:52:05</div><div class="t" style="left:-380px;width:1000px;text-align:right;top:657.76px;font-size:16px;line-height:16px;color:#8c8d8e;font-weight:400;">1.08914</div><div class="t" style="left:-160px;width:1000px;text-align:right;top:631.92px;font-size:19.35px;line-height:19.35px;color:#ffffff;font-weight:400;">1月25日 01:54:26</div><div class="t" style="left:-160px;width:1000px;text-align:right;top:657.76px;font-size:16px;line-height:16px;color:#8c8d8e;font-weight:400;">1.08925</div><div class="t" style="left:13px;width:1000px;text-align:right;top:632.19px;font-size:19.5px;line-height:19.5px;color:#ffffff;font-weight:400;">$250.00</div><div class="t" style="left:1023px;top:635.16px;font-size:16px;line-height:16px;color:#8c8d8e;font-weight:400;">×999</div><div class="t" style="left:213px;width:1000px;text-align:right;top:632.19px;font-size:19.5px;line-height:19.5px;color:#ffffff;font-weight:400;">$275.22</div><div class="t" style="left:410px;width:1000px;text-align:right;top:632.19px;font-size:19.5px;line-height:19.5px;color:#4fae48;font-weight:400;">$25.22</div><div style="position:absolute;left:16px;top:686px;width:1416px;height:1px;background:#3b3c3e;"></div><svg style="position:absolute;left:34px;top:706px;filter:drop-shadow(0 0 0.6px rgba(0,0,0,.6));" width="30" height="29" viewBox="0 0 30 29"><rect width="30" height="29" fill="#f0f0f2"/><circle cx="15" cy="14.5" r="6" fill="#c02040"/></svg><svg style="position:absolute;left:28px;top:700px;filter:drop-shadow(2px 2px 1.5px rgba(0,0,0,.55));" width="30" height="29" viewBox="0 0 30 29"><rect x="0" y="0.00" width="30" height="2.95" fill="#b8243a"/><rect x="0" y="2.90" width="30" height="2.95" fill="#eeeeee"/><rect x="0" y="5.80" width="30" height="2.95" fill="#b8243a"/><rect x="0" y="8.70" width="30" height="2.95" fill="#eeeeee"/><rect x="0" y="11.60" width="30" height="2.95" fill="#b8243a"/><rect x="0" y="14.50" width="30" height="2.95" fill="#eeeeee"/><rect x="0" y="17.40" width="30" height="2.95" fill="#b8243a"/><rect x="0" y="20.30" width="30" height="2.95" fill="#eeeeee"/><rect x="0" y="23.20" width="30" height="2.95" fill="#b8243a"/><rect x="0" y="26.10" width="30" height="2.95" fill="#eeeeee"/><rect x="0" y="0" width="16" height="17.40" fill="#3c3b6e"/><circle cx="3.5" cy="5" r="0.8" fill="#c8c8e0"/><circle cx="6.5" cy="3.5" r="0.8" fill="#c8c8e0"/><circle cx="9.5" cy="5" r="0.8" fill="#c8c8e0"/><circle cx="12.5" cy="3.5" r="0.8" fill="#c8c8e0"/><circle cx="3.5" cy="8" r="0.8" fill="#c8c8e0"/><circle cx="6.5" cy="6.5" r="0.8" fill="#c8c8e0"/><circle cx="9.5" cy="8" r="0.8" fill="#c8c8e0"/><circle cx="12.5" cy="6.5" r="0.8" fill="#c8c8e0"/><circle cx="3.5" cy="11" r="0.8" fill="#c8c8e0"/><circle cx="6.5" cy="9.5" r="0.8" fill="#c8c8e0"/><circle cx="9.5" cy="11" r="0.8" fill="#c8c8e0"/><circle cx="12.5" cy="9.5" r="0.8" fill="#c8c8e0"/><circle cx="6.5" cy="12.5" r="0.8" fill="#c8c8e0"/><circle cx="12.5" cy="12.5" r="0.8" fill="#c8c8e0"/></svg><div class="t" style="left:76px;top:701.92px;font-size:19px;line-height:19px;color:#ffffff;font-weight:400;">USD/JPY</div><div class="t" style="left:76px;top:726.96px;font-size:16px;line-height:16px;color:#8c8d8e;font-weight:400;">USDJPY-88709839</div><svg style="position:absolute;left:347px;top:705px;" width="14" height="14" viewBox="0 0 14 14"><path d="M2 2L9.5 9.5" stroke="#9a9b9c" stroke-width="3.2" stroke-linecap="square"/><path d="M13 5.5V13H5.5Z" fill="#9a9b9c"/></svg><div class="t" style="left:-380px;width:1000px;text-align:right;top:701.92px;font-size:19.35px;line-height:19.35px;color:#ffffff;font-weight:400;">1月25日 01:51:23</div><div class="t" style="left:-380px;width:1000px;text-align:right;top:727.76px;font-size:16px;line-height:16px;color:#8c8d8e;font-weight:400;">130.260</div><div class="t" style="left:-160px;width:1000px;text-align:right;top:701.92px;font-size:19.35px;line-height:19.35px;color:#ffffff;font-weight:400;">1月25日 01:52:47</div><div class="t" style="left:-160px;width:1000px;text-align:right;top:727.76px;font-size:16px;line-height:16px;color:#8c8d8e;font-weight:400;">130.246</div><div class="t" style="left:13px;width:1000px;text-align:right;top:702.19px;font-size:19.5px;line-height:19.5px;color:#ffffff;font-weight:400;">$250.00</div><div class="t" style="left:1023px;top:705.16px;font-size:16px;line-height:16px;color:#8c8d8e;font-weight:400;">×999</div><div class="t" style="left:213px;width:1000px;text-align:right;top:702.19px;font-size:19.5px;line-height:19.5px;color:#ffffff;font-weight:400;">$276.84</div><div class="t" style="left:410px;width:1000px;text-align:right;top:702.19px;font-size:19.5px;line-height:19.5px;color:#4fae48;font-weight:400;">$26.84</div><div style="position:absolute;left:16px;top:756px;width:1416px;height:1px;background:#3b3c3e;"></div><svg style="position:absolute;left:34px;top:776px;filter:drop-shadow(0 0 0.6px rgba(0,0,0,.6));" width="30" height="29" viewBox="0 0 30 29"><rect x="0" y="0.00" width="30" height="2.95" fill="#b8243a"/><rect x="0" y="2.90" width="30" height="2.95" fill="#eeeeee"/><rect x="0" y="5.80" width="30" height="2.95" fill="#b8243a"/><rect x="0" y="8.70" width="30" height="2.95" fill="#eeeeee"/><rect x="0" y="11.60" width="30" height="2.95" fill="#b8243a"/><rect x="0" y="14.50" width="30" height="2.95" fill="#eeeeee"/><rect x="0" y="17.40" width="30" height="2.95" fill="#b8243a"/><rect x="0" y="20.30" width="30" height="2.95" fill="#eeeeee"/><rect x="0" y="23.20" width="30" height="2.95" fill="#b8243a"/><rect x="0" y="26.10" width="30" height="2.95" fill="#eeeeee"/><rect x="0" y="0" width="16" height="17.40" fill="#3c3b6e"/><circle cx="3.5" cy="5" r="0.8" fill="#c8c8e0"/><circle cx="6.5" cy="3.5" r="0.8" fill="#c8c8e0"/><circle cx="9.5" cy="5" r="0.8" fill="#c8c8e0"/><circle cx="12.5" cy="3.5" r="0.8" fill="#c8c8e0"/><circle cx="3.5" cy="8" r="0.8" fill="#c8c8e0"/><circle cx="6.5" cy="6.5" r="0.8" fill="#c8c8e0"/><circle cx="9.5" cy="8" r="0.8" fill="#c8c8e0"/><circle cx="12.5" cy="6.5" r="0.8" fill="#c8c8e0"/><circle cx="3.5" cy="11" r="0.8" fill="#c8c8e0"/><circle cx="6.5" cy="9.5" r="0.8" fill="#c8c8e0"/><circle cx="9.5" cy="11" r="0.8" fill="#c8c8e0"/><circle cx="12.5" cy="9.5" r="0.8" fill="#c8c8e0"/><circle cx="6.5" cy="12.5" r="0.8" fill="#c8c8e0"/><circle cx="12.5" cy="12.5" r="0.8" fill="#c8c8e0"/></svg><svg style="position:absolute;left:28px;top:770px;filter:drop-shadow(2px 2px 1.5px rgba(0,0,0,.55));" width="30" height="29" viewBox="0 0 30 29"><rect width="30" height="29" fill="#0038b0"/><rect width="15" height="15" fill="#0038b0"/><path d="M0 0L15 15M15 0L0 15" stroke="#e8e8f0" stroke-width="4.2"/><path d="M0 0L15 15M15 0L0 15" stroke="#e86078" stroke-width="1.2"/><path d="M7.5 0V15M0 7.5H15" stroke="#f0f0f0" stroke-width="4"/><path d="M7.5 0V15M0 7.5H15" stroke="#e8203c" stroke-width="2.4"/><polygon points="23.30,4.60 24.25,6.89 26.72,7.09 24.84,8.70 25.42,11.11 23.30,9.82 21.18,11.11 21.76,8.70 19.88,7.09 22.35,6.89" fill="#e8e8f0"/><polygon points="23.30,6.22 23.82,7.48 25.18,7.59 24.15,8.48 24.46,9.80 23.30,9.09 22.14,9.80 22.45,8.48 21.42,7.59 22.78,7.48" fill="#e0284a"/><polygon points="20.00,10.20 20.90,12.36 23.23,12.55 21.46,14.07 22.00,16.35 20.00,15.13 18.00,16.35 18.54,14.07 16.77,12.55 19.10,12.36" fill="#e8e8f0"/><polygon points="20.00,11.73 20.49,12.92 21.78,13.02 20.80,13.86 21.10,15.11 20.00,14.44 18.90,15.11 19.20,13.86 18.22,13.02 19.51,12.92" fill="#e0284a"/><polygon points="26.60,10.20 27.50,12.36 29.83,12.55 28.06,14.07 28.60,16.35 26.60,15.13 24.60,16.35 25.14,14.07 23.37,12.55 25.70,12.36" fill="#e8e8f0"/><polygon points="26.60,11.73 27.09,12.92 28.38,13.02 27.40,13.86 27.70,15.11 26.60,14.44 25.50,15.11 25.80,13.86 24.82,13.02 26.11,12.92" fill="#e0284a"/><polygon points="23.30,16.30 24.25,18.59 26.72,18.79 24.84,20.40 25.42,22.81 23.30,21.52 21.18,22.81 21.76,20.40 19.88,18.79 22.35,18.59" fill="#e8e8f0"/><polygon points="23.30,17.92 23.82,19.18 25.18,19.29 24.15,20.18 24.46,21.50 23.30,20.79 22.14,21.50 22.45,20.18 21.42,19.29 22.78,19.18" fill="#e0284a"/></svg><div class="t" style="left:76px;top:771.92px;font-size:19px;line-height:19px;color:#ffffff;font-weight:400;">NZD/USD</div><div class="t" style="left:76px;top:796.96px;font-size:16px;line-height:16px;color:#8c8d8e;font-weight:400;">NZDUSD-88708345</div><svg style="position:absolute;left:347px;top:774px;" width="14" height="14" viewBox="0 0 14 14"><path d="M2 12L9.5 4.5" stroke="#9a9b9c" stroke-width="3.2" stroke-linecap="square"/><path d="M5.5 1H13V8.5Z" fill="#9a9b9c"/></svg><div class="t" style="left:-380px;width:1000px;text-align:right;top:771.92px;font-size:19.35px;line-height:19.35px;color:#ffffff;font-weight:400;">1月25日 01:29:58</div><div class="t" style="left:-380px;width:1000px;text-align:right;top:797.76px;font-size:16px;line-height:16px;color:#8c8d8e;font-weight:400;">0.64816</div><div class="t" style="left:-160px;width:1000px;text-align:right;top:771.92px;font-size:19.35px;line-height:19.35px;color:#ffffff;font-weight:400;">1月25日 01:52:31</div><div class="t" style="left:-160px;width:1000px;text-align:right;top:797.76px;font-size:16px;line-height:16px;color:#8c8d8e;font-weight:400;">0.64829</div><div class="t" style="left:13px;width:1000px;text-align:right;top:772.19px;font-size:19.5px;line-height:19.5px;color:#ffffff;font-weight:400;">$250.00</div><div class="t" style="left:1023px;top:775.16px;font-size:16px;line-height:16px;color:#8c8d8e;font-weight:400;">×500</div><div class="t" style="left:213px;width:1000px;text-align:right;top:772.19px;font-size:19.5px;line-height:19.5px;color:#ffffff;font-weight:400;">$275.07</div><div class="t" style="left:410px;width:1000px;text-align:right;top:772.19px;font-size:19.5px;line-height:19.5px;color:#4fae48;font-weight:400;">$25.07</div><div style="position:absolute;left:16px;top:826px;width:1416px;height:1px;background:#3b3c3e;"></div><svg style="position:absolute;left:34px;top:846px;filter:drop-shadow(0 0 0.6px rgba(0,0,0,.6));" width="30" height="29" viewBox="0 0 30 29"><rect width="30" height="29" fill="#f0f0f2"/><circle cx="15" cy="14.5" r="6" fill="#c02040"/></svg><svg style="position:absolute;left:28px;top:840px;filter:drop-shadow(2px 2px 1.5px rgba(0,0,0,.55));" width="30" height="29" viewBox="0 0 30 29"><rect x="0" y="0.00" width="30" height="2.95" fill="#b8243a"/><rect x="0" y="2.90" width="30" height="2.95" fill="#eeeeee"/><rect x="0" y="5.80" width="30" height="2.95" fill="#b8243a"/><rect x="0" y="8.70" width="30" height="2.95" fill="#eeeeee"/><rect x="0" y="11.60" width="30" height="2.95" fill="#b8243a"/><rect x="0" y="14.50" width="30" height="2.95" fill="#eeeeee"/><rect x="0" y="17.40" width="30" height="2.95" fill="#b8243a"/><rect x="0" y="20.30" width="30" height="2.95" fill="#eeeeee"/><rect x="0" y="23.20" width="30" height="2.95" fill="#b8243a"/><rect x="0" y="26.10" width="30" height="2.95" fill="#eeeeee"/><rect x="0" y="0" width="16" height="17.40" fill="#3c3b6e"/><circle cx="3.5" cy="5" r="0.8" fill="#c8c8e0"/><circle cx="6.5" cy="3.5" r="0.8" fill="#c8c8e0"/><circle cx="9.5" cy="5" r="0.8" fill="#c8c8e0"/><circle cx="12.5" cy="3.5" r="0.8" fill="#c8c8e0"/><circle cx="3.5" cy="8" r="0.8" fill="#c8c8e0"/><circle cx="6.5" cy="6.5" r="0.8" fill="#c8c8e0"/><circle cx="9.5" cy="8" r="0.8" fill="#c8c8e0"/><circle cx="12.5" cy="6.5" r="0.8" fill="#c8c8e0"/><circle cx="3.5" cy="11" r="0.8" fill="#c8c8e0"/><circle cx="6.5" cy="9.5" r="0.8" fill="#c8c8e0"/><circle cx="9.5" cy="11" r="0.8" fill="#c8c8e0"/><circle cx="12.5" cy="9.5" r="0.8" fill="#c8c8e0"/><circle cx="6.5" cy="12.5" r="0.8" fill="#c8c8e0"/><circle cx="12.5" cy="12.5" r="0.8" fill="#c8c8e0"/></svg><div class="t" style="left:76px;top:841.92px;font-size:19px;line-height:19px;color:#ffffff;font-weight:400;">USD/JPY</div><div class="t" style="left:76px;top:866.96px;font-size:16px;line-height:16px;color:#8c8d8e;font-weight:400;">USDJPY-88708484</div><svg style="position:absolute;left:347px;top:845px;" width="14" height="14" viewBox="0 0 14 14"><path d="M2 2L9.5 9.5" stroke="#9a9b9c" stroke-width="3.2" stroke-linecap="square"/><path d="M13 5.5V13H5.5Z" fill="#9a9b9c"/></svg><div class="t" style="left:-380px;width:1000px;text-align:right;top:841.92px;font-size:19.35px;line-height:19.35px;color:#ffffff;font-weight:400;">1月25日 01:31:00</div><div class="t" style="left:-380px;width:1000px;text-align:right;top:867.76px;font-size:16px;line-height:16px;color:#8c8d8e;font-weight:400;">130.284</div><div class="t" style="left:-160px;width:1000px;text-align:right;top:841.92px;font-size:19.35px;line-height:19.35px;color:#ffffff;font-weight:400;">1月25日 01:48:04</div><div class="t" style="left:-160px;width:1000px;text-align:right;top:867.76px;font-size:16px;line-height:16px;color:#8c8d8e;font-weight:400;">130.279</div><div class="t" style="left:13px;width:1000px;text-align:right;top:842.19px;font-size:19.5px;line-height:19.5px;color:#ffffff;font-weight:400;">$1 264.00</div><div class="t" style="left:1023px;top:845.16px;font-size:16px;line-height:16px;color:#8c8d8e;font-weight:400;">×999</div><div class="t" style="left:213px;width:1000px;text-align:right;top:842.19px;font-size:19.5px;line-height:19.5px;color:#ffffff;font-weight:400;">$1 308.90</div><div class="t" style="left:410px;width:1000px;text-align:right;top:842.19px;font-size:19.5px;line-height:19.5px;color:#4fae48;font-weight:400;">$44.90</div><div style="position:absolute;left:16px;top:896px;width:1416px;height:1px;background:#3b3c3e;"></div></div></div><div style="position:absolute;left:1455px;top:87px;width:432px;height:822px;background:#2e2f31;border-radius:8px;"></div><div style="position:absolute;left:1878px;top:253px;width:9px;height:655px;background:#393a3c;border-radius:4.5px;"></div><div class="t" style="left:1486px;top:107.87px;font-size:19px;line-height:19px;color:#ffffff;font-weight:400;">余额</div><div class="t" style="left:857px;width:1000px;text-align:right;top:108.79px;font-size:19.5px;line-height:19.5px;color:#ffffff;font-weight:400;">$28 768.09</div><div class="t" style="left:1486px;top:158.77px;font-size:19px;line-height:19px;color:#ffffff;font-weight:400;">盈利</div><div class="t" style="left:857px;width:1000px;text-align:right;top:158.49px;font-size:19.5px;line-height:19.5px;color:#4fae48;font-weight:400;">$0.00</div><div class="t" style="left:1486px;top:195.12px;font-size:19px;line-height:19px;color:#ffffff;font-weight:400;">已使用</div><div class="t" style="left:857px;width:1000px;text-align:right;top:195.19px;font-size:19.5px;line-height:19.5px;color:#ffffff;font-weight:400;">$0.00</div><div class="t" style="left:1486px;top:230.67px;font-size:19px;line-height:19px;color:#ffffff;font-weight:400;">可用</div><div class="t" style="left:857px;width:1000px;text-align:right;top:230.89px;font-size:19.5px;line-height:19.5px;color:#ffffff;font-weight:400;">$28 768.09</div><svg style="position:absolute;left:1474px;top:305px;" width="15" height="10" viewBox="0 0 15 10"><path d="M1 1.5L7.5 8L14 1.5" fill="none" stroke="#6b80d8" stroke-width="1.6"/></svg><div class="t" style="left:1501px;top:302.36px;font-size:16px;line-height:16px;color:#a2a3a4;font-weight:400;">未平仓位</div><div style="position:absolute;left:1834.2px;top:307.2px;width:5.6px;height:5.6px;background:#ffffff;border-radius:50%;"></div><div style="position:absolute;left:1842.2px;top:307.2px;width:5.6px;height:5.6px;background:#ffffff;border-radius:50%;"></div><div style="position:absolute;left:1850.2px;top:307.2px;width:5.6px;height:5.6px;background:#ffffff;border-radius:50%;"></div><div style="position:absolute;left:1470px;top:329px;width:402px;height:1px;background:#38393b;"></div><div class="t" style="left:1486px;top:348.66px;font-size:16px;line-height:16px;color:#8e8f90;font-weight:400;">工具</div><div class="t" style="left:1625px;top:348.66px;font-size:16px;line-height:16px;color:#8e8f90;font-weight:400;">价格</div><div class="t" style="left:800px;width:1000px;text-align:right;top:348.66px;font-size:16px;line-height:16px;color:#8e8f90;font-weight:400;">盈利</div><div style="position:absolute;left:1812px;top:345px;width:45px;height:22px;background:#353638;border-radius:5px;overflow:hidden;"></div><div style="position:absolute;left:1812px;top:345px;width:22px;height:22px;background:#2b2c2e;border-top-left-radius:5px;border-bottom-left-radius:5px;"></div><div class="t" style="left:1323px;width:1000px;text-align:center;top:348.11px;font-size:17px;line-height:17px;color:#a9aaab;font-weight:400;">$</div><div class="t" style="left:1345.5px;width:1000px;text-align:center;top:349.30px;font-size:15px;line-height:15px;color:#a9aaab;font-weight:400;">%</div><div style="position:absolute;left:1470px;top:375px;width:402px;height:151px;box-sizing:border-box;border:1px solid #5f6062;border-radius:6px;"></div><div class="t" style="left:1171px;width:1000px;text-align:center;top:405.97px;font-size:20px;line-height:20px;color:#8e8f91;font-weight:400;">您暂时没有未平仓交易.</div><div style="position:absolute;left:1593px;top:446px;width:157px;height:47px;box-sizing:border-box;background:#232426;border:1px solid #48494b;border-radius:5px;"></div><div class="t" style="left:1171px;width:1000px;text-align:center;top:460.89px;font-size:19.5px;line-height:19.5px;color:#ffffff;font-weight:700;letter-spacing:-0.4px;">Start trading</div><div style="position:absolute;left:1597px;top:549px;width:148px;height:47px;box-sizing:border-box;background:#232426;border:1px solid #48494b;border-radius:5px;"></div><div class="t" style="left:1171px;width:1000px;text-align:center;top:562.47px;font-size:20px;line-height:20px;color:#ffffff;font-weight:400;">已平仓交易</div><svg style="position:absolute;left:1474px;top:624px;" width="15" height="10" viewBox="0 0 15 10"><path d="M1 1.5L7.5 8L14 1.5" fill="none" stroke="#6b80d8" stroke-width="1.6"/></svg><div class="t" style="left:1501px;top:621.86px;font-size:16px;line-height:16px;color:#a2a3a4;font-weight:400;">我的收藏</div><div style="position:absolute;left:1470px;top:648px;width:402px;height:1px;background:#38393b;"></div><div class="t" style="left:1519px;top:667.61px;font-size:16px;line-height:16px;color:#8e8f90;font-weight:400;">工具</div><div class="t" style="left:740px;width:1000px;text-align:right;top:667.61px;font-size:16px;line-height:16px;color:#8e8f90;font-weight:400;">价格</div><div class="t" style="left:860px;width:1000px;text-align:right;top:667.61px;font-size:16px;line-height:16px;color:#8e8f90;font-weight:400;">一日涨跌幅</div><div style="position:absolute;left:1470px;top:694px;width:402px;height:1px;background:#38393b;"></div><div class="t" style="left:1518px;top:708.27px;font-size:20px;line-height:20px;color:#ffffff;font-weight:400;">US DJ 30</div><div class="t" style="left:740px;width:1000px;text-align:right;top:708.02px;font-size:20.3px;line-height:20.3px;color:#ffffff;font-weight:400;">33 745</div><div class="t" style="left:860px;width:1000px;text-align:right;top:708.52px;font-size:19.7px;line-height:19.7px;color:#e84a4a;font-weight:400;">-0.20%</div><div style="position:absolute;left:1470px;top:742px;width:402px;height:1px;background:#38393b;"></div><div style="position:absolute;left:1644px;top:749.5px;width:99px;height:33px;background:linear-gradient(90deg,#7a2a2e 0,#7a2a2e 72%,#8a2a2f 72%);"></div><div class="t" style="left:1518px;top:756.27px;font-size:20px;line-height:20px;color:#ffffff;font-weight:400;">US NDAQ 1…</div><div class="t" style="left:740px;width:1000px;text-align:right;top:756.02px;font-size:20.3px;line-height:20.3px;color:#ffffff;font-weight:400;">11 818.20</div><div class="t" style="left:860px;width:1000px;text-align:right;top:756.52px;font-size:19.7px;line-height:19.7px;color:#e84a4a;font-weight:400;">-0.74%</div><div style="position:absolute;left:1470px;top:790px;width:402px;height:1px;background:#38393b;"></div><div class="t" style="left:1518px;top:804.27px;font-size:20px;line-height:20px;color:#ffffff;font-weight:400;">US SPX 500</div><div class="t" style="left:740px;width:1000px;text-align:right;top:804.02px;font-size:20.3px;line-height:20.3px;color:#ffffff;font-weight:400;">4 015.09</div><div class="t" style="left:860px;width:1000px;text-align:right;top:804.52px;font-size:19.7px;line-height:19.7px;color:#e84a4a;font-weight:400;">-0.39%</div><div style="position:absolute;left:1470px;top:838px;width:402px;height:1px;background:#38393b;"></div><div style="position:absolute;left:1644px;top:845.5px;width:99px;height:33px;background:linear-gradient(90deg,#7a2a2e 0,#7a2a2e 72%,#8a2a2f 72%);"></div><div class="t" style="left:1518px;top:852.27px;font-size:20px;line-height:20px;color:#ffffff;font-weight:400;">Ethereum</div><div class="t" style="left:740px;width:1000px;text-align:right;top:852.02px;font-size:20.3px;line-height:20.3px;color:#ffffff;font-weight:400;">1 544.175</div><div class="t" style="left:860px;width:1000px;text-align:right;top:852.52px;font-size:19.7px;line-height:19.7px;color:#e84a4a;font-weight:400;">-4.41%</div><div style="position:absolute;left:1470px;top:886px;width:402px;height:1px;background:#38393b;"></div><div style="position:absolute;left:0px;top:909px;width:1892px;height:60px;background:#1a2646;"></div><svg style="position:absolute;left:22px;top:927px;" width="25" height="25" viewBox="0 0 25 25"><path fill="#fff" d="M0 3.3L10 1.9V11.6H0Z M11.2 1.7L24.5 0V11.6H11.2Z M0 12.8H10V22.6L0 21.2Z M11.2 12.8H24.5V24.5L11.2 22.8Z"/></svg><div style="position:absolute;left:70px;top:909px;width:516px;height:60px;box-sizing:border-box;background:#f2f2f2;border:2px solid #c6c6c6;border-bottom:none;"></div><svg style="position:absolute;left:87px;top:926px;" width="26" height="26" viewBox="0 0 26 26"><circle cx="16" cy="10" r="7.2" fill="none" stroke="#1a1a1a" stroke-width="1.6"/><path d="M11 15.2L1.5 24.7" stroke="#1a1a1a" stroke-width="1.8"/></svg><div class="t" style="left:130px;top:930.32px;font-size:22.3px;line-height:22.3px;color:#262626;font-weight:400;">Type here to search</div><svg style="position:absolute;left:609px;top:926px;" width="27" height="25" viewBox="0 0 27 25"><path d="M1.2 1V4.2H16.8V1M1.2 24V20.4H16.8V24" fill="none" stroke="#fff" stroke-width="1.3"/><rect x="1.2" y="7.5" width="15.6" height="10.1" fill="none" stroke="#fff" stroke-width="1.3"/><path d="M23.6 1V24" stroke="#fff" stroke-width="1.2"/><rect x="22.1" y="8" width="3" height="3" fill="#fff"/></svg><svg style="position:absolute;left:682px;top:924px;" width="35" height="30" viewBox="0 0 35 30"><path d="M1 4Q1 2 3 2H13Q15 2 15.5 3.5L16 5H31Q33 5 33 7V25Q33 27 31 27H3Q1 27 1 25Z" fill="#e2a50a"/><path d="M1 7.5H31Q33 7.5 33 9.5V25Q33 27 31 27H3Q1 27 1 25Z" fill="#fbd270"/><path d="M6.5 28.5V14.5H27V28.5H23V18.5H10.5V28.5Z" fill="#3d95e0"/></svg><div style="position:absolute;left:669px;top:966px;width:61px;height:3px;background:#78b6ec;"></div><svg style="position:absolute;left:757px;top:924px;" width="34" height="31" viewBox="0 0 34 31"><circle cx="17" cy="15.5" r="15" fill="#1aa0e8"/><circle cx="8" cy="7" r="7" fill="#1aa0e8"/><circle cx="26" cy="24" r="7" fill="#1aa0e8"/><text x="17" y="23.5" text-anchor="middle" font-family="Liberation Sans" font-weight="700" font-size="23" fill="#fff">S</text></svg><div style="position:absolute;left:744px;top:966px;width:61px;height:3px;background:#78b6ec;"></div><svg style="position:absolute;left:832px;top:922px;" width="34" height="34" viewBox="0 0 34 34"><rect x="1" y="1" width="32" height="32" rx="1.5" fill="#fcd000"/><path d="M17 33V19Q17 17 19 17H33Z" fill="#3c3c3c"/><path d="M17 33L33 17V31.5Q33 33 31.5 33Z" fill="#e8a800"/></svg><div style="position:absolute;left:819px;top:966px;width:61px;height:3px;background:#78b6ec;"></div><svg style="position:absolute;left:907px;top:923px;" width="34" height="33" viewBox="0 0 34 33"><rect x="11" y="3" width="22" height="27" rx="2" fill="#1f7a45"/><path d="M17 7H31M17 11H31M17 15H31M17 19H31M17 23H31M17 27H31M22 6V29M26.5 6V29" stroke="#e8f4ec" stroke-width="1.4"/><path d="M0 4L19 1V32L0 29Z" fill="#1a6e3c"/><text x="9.5" y="22.5" text-anchor="middle" font-family="Liberation Sans" font-weight="700" font-size="15" fill="#fff">X</text></svg><div style="position:absolute;left:894px;top:966px;width:61px;height:3px;background:#78b6ec;"></div><div style="position:absolute;left:941px;top:966px;width:14px;height:3px;background:#5a8cbc;"></div><svg style="position:absolute;left:981px;top:921px;" width="37" height="37" viewBox="0 0 37 37"><defs><linearGradient id="zg" x1="0" y1="0" x2="0" y2="1"><stop offset="0" stop-color="#2a7af8"/><stop offset="1" stop-color="#0b5cf0"/></linearGradient></defs><rect x="0.5" y="0.5" width="36" height="36" rx="14" fill="url(#zg)"/><text x="18.5" y="22" text-anchor="middle" font-family="Liberation Sans" font-size="10" fill="#fff" letter-spacing="-0.3">zoom</text></svg><div style="position:absolute;left:969px;top:966px;width:61px;height:3px;background:#78b6ec;"></div><svg style="position:absolute;left:1056px;top:922px;" width="40" height="40" viewBox="0 0 40 40"><circle cx="18" cy="18" r="16.5" fill="#dd4433"/><path d="M18 18L3.7 26.25A16.5 16.5 0 0 1 18 1.5Z" fill="#dd4433"/><path d="M18 18L3.7 26.25A16.5 16.5 0 0 0 26 32.4Z" fill="#22a055"/><path d="M18 18L26 32.4A16.5 16.5 0 0 0 34.5 18 16.5 16.5 0 0 0 32.3 9.75Z" fill="#fbc02d"/><path d="M18 18L32.3 9.75A16.5 16.5 0 0 0 3.7 9.75Z" fill="#dd4433"/><circle cx="18" cy="18" r="7.5" fill="#fff"/><circle cx="18" cy="18" r="5.8" fill="#3a7de8"/><circle cx="27.5" cy="27" r="11.5" fill="#7a22b0"/><text x="28" y="33" text-anchor="middle" font-family="Liberation Sans" font-size="15" fill="#e8d8f0">L</text></svg><div style="position:absolute;left:1044px;top:966px;width:61px;height:3px;background:#78b6ec;"></div><div style="position:absolute;left:1091px;top:966px;width:14px;height:3px;background:#5a8cbc;"></div><svg style="position:absolute;left:1131px;top:922px;" width="40" height="40" viewBox="0 0 40 40"><rect x="9" y="0" width="25" height="20" rx="3" fill="#4cb86a"/><path d="M1.8 9Q1.8 7 3.8 7H25Q27 7 27 9V25Q27 27 25 27H9L1.8 33Z" fill="#10b048"/><path d="M9 7H27V20H11Q9 20 9 18Z" fill="#0a8a36"/><circle cx="28" cy="27.5" r="11.5" fill="#7a22b0"/><text x="28.5" y="33.5" text-anchor="middle" font-family="Liberation Sans" font-size="15" fill="#e8d8f0">L</text></svg><div style="position:absolute;left:1119px;top:966px;width:61px;height:3px;background:#78b6ec;"></div><svg style="position:absolute;left:1206px;top:923px;" width="36" height="34" viewBox="0 0 36 34"><circle cx="18" cy="17" r="16.5" fill="#2a90e8"/><circle cx="14" cy="11" r="11" fill="#5ab8f8" opacity=".6"/><path d="M11 9Q10 11 12 16T20 24Q23 26 25 24L26.5 22.5 22.5 19.5 20.5 21Q17.5 19.5 15 16T14 12.5L15.5 10.5 12.5 6.5Z" fill="#fff"/></svg><div style="position:absolute;left:1194px;top:966px;width:61px;height:3px;background:#78b6ec;"></div><svg style="position:absolute;left:1280px;top:922px;" width="40" height="38" viewBox="0 0 40 38"><ellipse cx="14" cy="13" rx="13" ry="11" fill="#2dc100"/><path d="M5 20L3.5 26L10 22Z" fill="#2dc100"/><circle cx="9.5" cy="10" r="1.8" fill="#1a4a10"/><circle cx="18.5" cy="10" r="1.8" fill="#1a4a10"/><ellipse cx="27" cy="23.5" rx="10.5" ry="9" fill="#f2f2f2"/><path d="M33 29L35 34L29 31Z" fill="#f2f2f2"/><circle cx="23.5" cy="21.5" r="1.5" fill="#555"/><circle cx="30.5" cy="21.5" r="1.5" fill="#555"/></svg><div style="position:absolute;left:1269px;top:966px;width:61px;height:3px;background:#78b6ec;"></div><svg style="position:absolute;left:1476px;top:932px;" width="19" height="13" viewBox="0 0 19 13"><path d="M1 12L9.5 2L18 12" fill="none" stroke="#fff" stroke-width="1.4"/></svg><svg style="position:absolute;left:1509px;top:927px;" width="24" height="24" viewBox="0 0 24 24"><circle cx="12" cy="12" r="11.5" fill="#2a90e8"/><circle cx="9.5" cy="8" r="8" fill="#6ac0f8" opacity=".6"/><path d="M7 6Q6.5 8 8 11T13.5 17Q15.5 18.5 17 17L18 16 15.3 13.8 14 15Q12 14 10.5 11.5T9.8 9L10.8 7.7 8.7 5Z" fill="#fff"/></svg><svg style="position:absolute;left:1544px;top:929px;" width="27" height="19" viewBox="0 0 27 19"><path d="M5 1V6M9 1V6" stroke="#fff" stroke-width="1.4"/><path d="M3 6H11V9Q11 12 7 12Q3 12 3 9Z" fill="#fff"/><path d="M7 12V15" stroke="#fff" stroke-width="1.4"/><rect x="9" y="5.5" width="15" height="11" fill="none" stroke="#fff" stroke-width="1.5"/><rect x="11" y="7.5" width="11" height="7" fill="#fff"/><rect x="24.2" y="9" width="2" height="4" fill="#fff"/></svg><svg style="position:absolute;left:1584px;top:930px;" width="21" height="20" viewBox="0 0 21 20"><path d="M2 19A17 17 0 0 1 19 2M6 19A13 13 0 0 1 19 6M10 19A9 9 0 0 1 19 10" fill="none" stroke="#fff" stroke-width="1.3" opacity=".85"/><circle cx="18" cy="18" r="1.7" fill="#fff"/></svg><div style="position:absolute;left:1612px;top:910px;width:34px;height:59px;background:#2c3a58;"></div><svg style="position:absolute;left:1617px;top:928px;" width="25" height="21" viewBox="0 0 25 21"><path d="M1.5 7H6L12 1.5V19.5L6 14H1.5Z" fill="none" stroke="#fff" stroke-width="1.3"/><path d="M15.5 7.5Q17.5 10.5 15.5 13.5M18.5 5Q22 10.5 18.5 16" fill="none" stroke="#fff" stroke-width="1.3"/></svg><div class="t" style="left:1163px;width:1000px;text-align:center;top:927.53px;font-size:23px;line-height:23px;color:#ffffff;font-weight:400;">中</div><div style="position:absolute;left:1680px;top:910px;width:54px;height:59px;background:#2c3a58;"></div><div style="position:absolute;left:1695px;top:927px;width:24px;height:23px;background:#ffffff;"></div><div class="t" style="left:1207px;width:1000px;text-align:center;top:931.76px;font-size:18px;line-height:18px;color:#111111;font-weight:400;">拼</div><div class="t" style="left:1288px;width:1000px;text-align:center;top:916.79px;font-size:17.5px;line-height:17.5px;color:#ffffff;font-weight:400;">11:19 AM</div><div class="t" style="left:1286px;width:1000px;text-align:center;top:944.76px;font-size:18px;line-height:18px;color:#ffffff;font-weight:400;">25/1/2023</div><svg style="position:absolute;left:1855px;top:926px;" width="26" height="22" viewBox="0 0 26 22"><path d="M1 1H25V18H8L1 22Z" fill="#fff"/><path d="M5 6H21M5 10H21M5 14H21" stroke="#1b2848" stroke-width="1.3"/></svg><div style="position:absolute;left:1866px;top:938px;width:25px;height:25px;box-sizing:border-box;background:#333538;border:1.5px solid #8a8b8c;border-radius:50%;"></div><div class="t" style="left:1378.5px;width:1000px;text-align:center;top:943.88px;font-size:15.5px;line-height:15.5px;color:#ffffff;font-weight:700;">10</div><svg style="position:absolute;left:1675px;top:896px;filter:drop-shadow(1px 1px 0.4px #000);" width="40" height="42" viewBox="0 0 40 42"><defs><mask id="fm"><rect width="40" height="42" fill="#fff"/><path d="M27 9.8Q21 7 19.2 13.5L15.2 40" fill="none" stroke="#000" stroke-width="4.4"/><path d="M8.5 20.3H26" stroke="#000" stroke-width="3.4"/></mask></defs><g mask="url(#fm)"><path d="M10 2H25Q35 2 35 12V24Q35 34.5 25 34.5H22.5L15.5 40.5L15.8 34.5H12Q2 34.5 2 24V12Q2 2 10 2Z" fill="#fff"/></g></svg><div class="t" style="left:1721px;top:896.33px;font-size:36px;line-height:36px;color:#ffffff;font-weight:400;-webkit-text-stroke:0.5px #000;filter:drop-shadow(1px 1px 0.3px #000);">@der888</div></body></html>
